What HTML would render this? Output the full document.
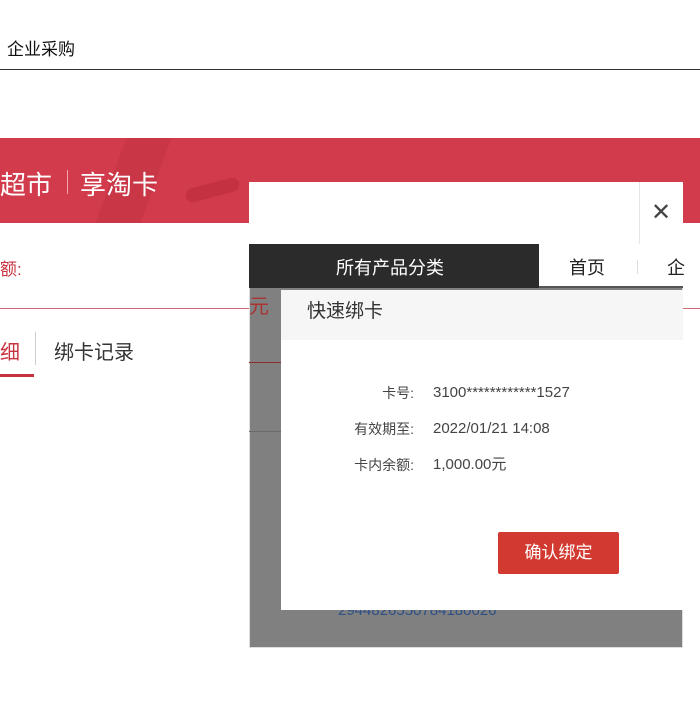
<!DOCTYPE html>
<html><head><meta charset="utf-8"><style>
*{margin:0;padding:0;box-sizing:border-box}
body{width:700px;height:721px;background:#fff;position:relative;overflow:hidden;font-family:"Liberation Sans","Noto Sans CJK SC",sans-serif;color:#222}
.a{position:absolute}
</style></head><body>
<div class="a" style="left:7px;top:35px;font-size:17px;color:#111">企业采购</div>
<div class="a" style="left:0;top:69px;width:700px;height:1px;background:#333"></div>
<div class="a" style="left:0;top:138px;width:700px;height:85px;background:#d23b4b;overflow:hidden">
  <div class="a" style="left:110px;top:-10px;width:45px;height:110px;background:#c93646;transform:skewX(-20deg)"></div>
  <div class="a" style="left:185px;top:45px;width:55px;height:14px;background:#c43242;border-radius:7px;transform:rotate(-15deg)"></div>
</div>
<div class="a" style="left:0;top:165px;font-size:26px;color:#fff">超市</div>
<div class="a" style="left:67px;top:170px;width:1px;height:24px;background:#f3a5ae"></div>
<div class="a" style="left:80px;top:165px;font-size:26px;color:#fff">享淘卡</div>
<div class="a" style="left:0;top:255px;font-size:17px;color:#c8323f">额:</div>
<div class="a" style="left:0;top:308px;width:700px;height:1px;background:#d06a72"></div>
<div class="a" style="left:0;top:336px;font-size:20px;color:#c8323f">细</div>
<div class="a" style="left:35px;top:332px;width:1px;height:33px;background:#ccc"></div>
<div class="a" style="left:54px;top:336px;font-size:20px;color:#333">绑卡记录</div>
<div class="a" style="left:0;top:374px;width:34px;height:3px;background:#c8323f"></div>

<div class="a" style="left:249px;top:182px;width:434px;height:466px;background:#808080;border:1px solid #ddd"></div>
<div class="a" style="left:249px;top:182px;width:434px;height:62px;background:#fff"></div>
<div class="a" style="left:639px;top:182px;width:1px;height:62px;background:#e6e6e6"></div>
<div class="a" style="left:651px;top:198px;font-size:24px;color:#444;font-weight:300">✕</div>
<div class="a" style="left:249px;top:244px;width:290px;height:44px;background:#2b2b2b"></div>
<div class="a" style="left:336px;top:254px;font-size:18px;color:#fff">所有产品分类</div>
<div class="a" style="left:539px;top:244px;width:144px;height:44px;background:#fff;border-bottom:2px solid #555"></div>
<div class="a" style="left:569px;top:254px;font-size:18px;color:#222">首页</div>
<div class="a" style="left:637px;top:260px;width:1px;height:14px;background:#ddd"></div>
<div class="a" style="left:667px;top:254px;font-size:18px;color:#222">企</div>
<div class="a" style="left:249px;top:290px;font-size:20px;color:#a33">元</div>
<div class="a" style="left:249px;top:362px;width:32px;height:1px;background:#8a2a2a"></div>
<div class="a" style="left:249px;top:431px;width:32px;height:1px;background:#6a6a6a"></div>
<div class="a" style="left:338px;top:602px;font-size:15px;color:#2c4f86">2944826550784180026</div>

<div class="a" style="left:281px;top:290px;width:402px;height:320px;background:#fff"></div>
<div class="a" style="left:281px;top:290px;width:402px;height:50px;background:#f6f6f6"></div>
<div class="a" style="left:307px;top:296px;font-size:19px;color:#333">快速绑卡</div>
<div class="a" style="left:300px;top:383px;width:114px;text-align:right;font-size:14px;color:#444;line-height:20px">卡号:<br><span style="display:block;margin-top:16px">有效期至:</span><span style="display:block;margin-top:16px">卡内余额:</span></div>
<div class="a" style="left:433px;top:383px;font-size:15px;color:#444;line-height:20px">3100************1527<br><span style="display:block;margin-top:16px">2022/01/21 14:08</span><span style="display:block;margin-top:16px">1,000.00元</span></div>
<div class="a" style="left:498px;top:532px;width:121px;height:42px;background:#d23a31;border-radius:2px;color:#fff;font-size:17px;text-align:center;line-height:42px">确认绑定</div>
</body></html>
